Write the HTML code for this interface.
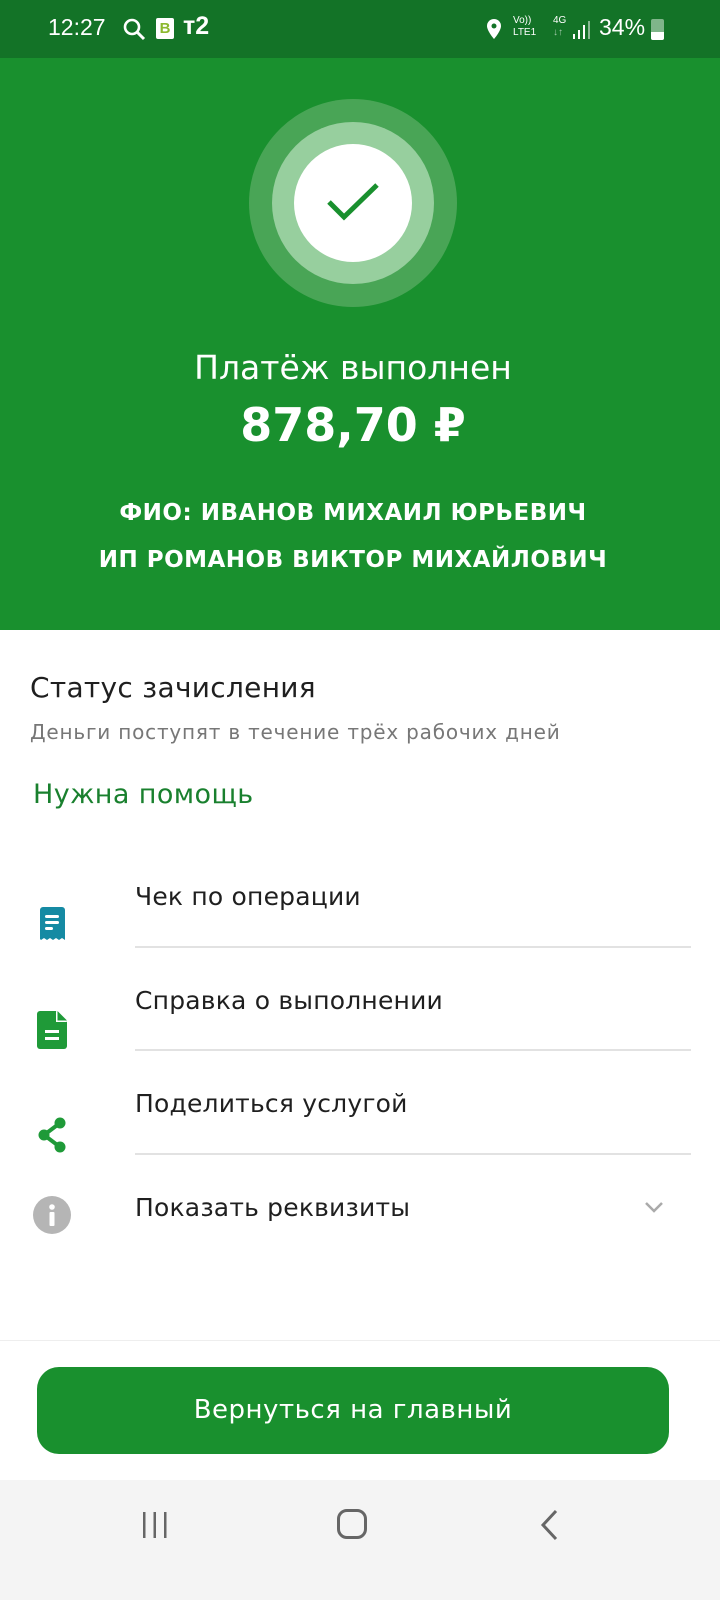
<!DOCTYPE html>
<html><head><meta charset="utf-8"><style>
*{margin:0;padding:0;box-sizing:border-box}
body{width:720px;height:1600px;background:#fff;font-family:"DejaVu Sans","Liberation Sans",sans-serif;position:relative;overflow:hidden}
.abs{position:absolute}
.sb{top:0;left:0;width:720px;height:58px;background:#137327;color:#fff;font-family:"Liberation Sans",sans-serif}
.hero{top:58px;left:0;width:720px;height:572px;background:#19902e}
.c{position:absolute;border-radius:50%}
.t{position:absolute;left:0;width:720px;text-align:center;color:#fff}
.row{position:absolute;left:135px;font-size:25px;color:#1f1f1f;letter-spacing:0.2px}
.line{position:absolute;left:135px;width:556px;height:2px;background:#e2e2e2}
</style></head><body>
<div class="abs sb">
 <div class="abs" style="left:48px;top:14px;font-size:23px">12:27</div>
 <svg class="abs" style="left:122px;top:17px" width="26" height="26" viewBox="0 0 26 26"><circle cx="10" cy="10" r="7" fill="none" stroke="#fff" stroke-width="2.6"/><path d="M15 15l7 7" stroke="#fff" stroke-width="3"/></svg>
 <div class="abs" style="left:156px;top:18px;width:18px;height:21px;background:#fff;border-radius:2px;color:#8cb82e;font-size:15px;font-weight:bold;text-align:center;line-height:21px">B</div>
 <div class="abs" style="left:183px;top:12px;font-size:25px;font-weight:bold">т2</div>
 <svg class="abs" style="left:486px;top:18px" width="16" height="22" viewBox="0 0 16 22"><path d="M8 1a7 7 0 0 0-7 7c0 5 7 13 7 13s7-8 7-13a7 7 0 0 0-7-7z" fill="#fff"/><circle cx="8" cy="8" r="2.5" fill="#137327"/></svg>
 <div class="abs" style="left:513px;top:15px;font-size:10px;line-height:12px">Vo))<br>LTE1</div>
 <div class="abs" style="left:553px;top:15px;font-size:10px;line-height:12px">4G<br><span style="opacity:.6">↓↑</span></div>
 <svg class="abs" style="left:572px;top:20px" width="20" height="20"><rect x="1" y="14" width="2" height="5" fill="#fff"/><rect x="6" y="10" width="2" height="9" fill="#fff"/><rect x="11" y="5" width="2" height="14" fill="#fff"/><rect x="16" y="1" width="2" height="18" fill="#fff" opacity=".5"/></svg>
 <div class="abs" style="left:599px;top:14px;font-size:23px">34%</div>
 <div class="abs" style="left:651px;top:19px;width:13px;height:21px;background:#7fb58a;border-radius:2px"><div style="position:absolute;bottom:0;left:0;width:13px;height:8px;background:#fff;border-radius:0 0 2px 2px"></div></div>
</div>
<div class="abs hero">
 <div class="c" style="left:249px;top:41px;width:208px;height:208px;background:#49a556"></div>
 <div class="c" style="left:272px;top:64px;width:162px;height:162px;background:#97cf9e"></div>
 <div class="c" style="left:294px;top:86px;width:118px;height:118px;background:#fff"></div>
 <svg class="abs" style="left:325px;top:122px" width="56" height="44" viewBox="0 0 56 44"><path d="M4 22l15 15L52 5" fill="none" stroke="#19902e" stroke-width="5"/></svg>
 <div class="t" style="top:290px;font-size:33px;left:-7px">Платёж выполнен</div>
 <div class="t" style="top:340px;font-size:46px;font-weight:bold;left:-7px">878,70 ₽</div>
 <div class="t" style="top:442px;font-size:23px;font-weight:bold;left:-7px;letter-spacing:0.5px">ФИО: ИВАНОВ МИХАИЛ ЮРЬЕВИЧ</div>
 <div class="t" style="top:489px;font-size:23px;font-weight:bold;left:-7px;letter-spacing:0.5px">ИП РОМАНОВ ВИКТОР МИХАЙЛОВИЧ</div>
</div>
<div class="abs" style="left:30px;top:671px;font-size:28px;color:#1f1f1f;letter-spacing:0.3px">Статус зачисления</div>
<div class="abs" style="left:30px;top:720px;font-size:20px;color:#777;letter-spacing:0.8px">Деньги поступят в течение трёх рабочих дней</div>
<div class="abs" style="left:33px;top:779px;font-size:27px;color:#19802e;letter-spacing:0.4px">Нужна помощь</div>

<svg class="abs" style="left:38px;top:907px" width="28" height="34" viewBox="0 0 28 34"><path d="M3 0h21a3 3 0 0 1 3 3v30l-3-2-3 2-3-2-3 2-3-2-3 2-3-2-3 2-1-1V3a3 3 0 0 1 3-3z" fill="#158aa3"/><rect x="7" y="8" width="14" height="3" rx="1.5" fill="#fff"/><rect x="7" y="14" width="14" height="3" rx="1.5" fill="#fff"/><rect x="7" y="20" width="8" height="3" rx="1.5" fill="#fff"/></svg>
<div class="row" style="top:882px">Чек по операции</div>
<div class="line" style="top:946px"></div>

<svg class="abs" style="left:37px;top:1011px" width="31" height="38" viewBox="0 0 31 38"><path d="M3 0h16l11 11v24a3 3 0 0 1-3 3H3a3 3 0 0 1-3-3V3a3 3 0 0 1 3-3z" fill="#1f9a38"/><path d="M19 0v11h11z" fill="#fff"/><path d="M20.5 0v9.5h9.5z" fill="#1f9a38"/><rect x="8" y="19" width="14" height="3" fill="#fff"/><rect x="8" y="26" width="14" height="3" fill="#fff"/></svg>
<div class="row" style="top:986px">Справка о выполнении</div>
<div class="line" style="top:1049px"></div>

<svg class="abs" style="left:36px;top:1117px" width="32" height="36" viewBox="0 0 32 36"><path d="M24 6L8 18l16 12" fill="none" stroke="#1f9a38" stroke-width="4"/><circle cx="24" cy="6" r="5.5" fill="#1f9a38"/><circle cx="8" cy="18" r="5.5" fill="#1f9a38"/><circle cx="24" cy="30" r="5.5" fill="#1f9a38"/></svg>
<div class="row" style="top:1089px">Поделиться услугой</div>
<div class="line" style="top:1153px"></div>

<svg class="abs" style="left:33px;top:1196px" width="38" height="38" viewBox="0 0 38 38"><circle cx="19" cy="19" r="19" fill="#b5b5b5"/><circle cx="19" cy="11" r="2.8" fill="#fff"/><rect x="16.5" y="16" width="5" height="14" rx="1" fill="#fff"/></svg>
<div class="row" style="top:1193px">Показать реквизиты</div>
<svg class="abs" style="left:643px;top:1200px" width="22" height="14" viewBox="0 0 22 14"><path d="M3 3l8 8 8-8" fill="none" stroke="#aaa" stroke-width="2.5"/></svg>

<div class="abs" style="left:0;top:1340px;width:720px;height:1px;background:#eee"></div>
<div class="abs" style="left:37px;top:1367px;width:632px;height:87px;background:#19902e;border-radius:22px;color:#fff;font-size:26px;letter-spacing:0.5px;text-align:center;line-height:87px">Вернуться на главный</div>
<div class="abs" style="left:0;top:1480px;width:720px;height:120px;background:#f4f4f4">
 <svg class="abs" style="left:140px;top:30px" width="30" height="30"><rect x="3" y="2" width="2.5" height="26" fill="#666"/><rect x="13.5" y="2" width="2.5" height="26" fill="#666"/><rect x="24" y="2" width="2.5" height="26" fill="#666"/></svg>
 <div class="abs" style="left:337px;top:29px;width:30px;height:30px;border:3px solid #666;border-radius:10px"></div>
 <svg class="abs" style="left:538px;top:29px" width="22" height="32"><path d="M18 2L5 16l13 14" fill="none" stroke="#666" stroke-width="3"/></svg>
</div>
</body></html>
